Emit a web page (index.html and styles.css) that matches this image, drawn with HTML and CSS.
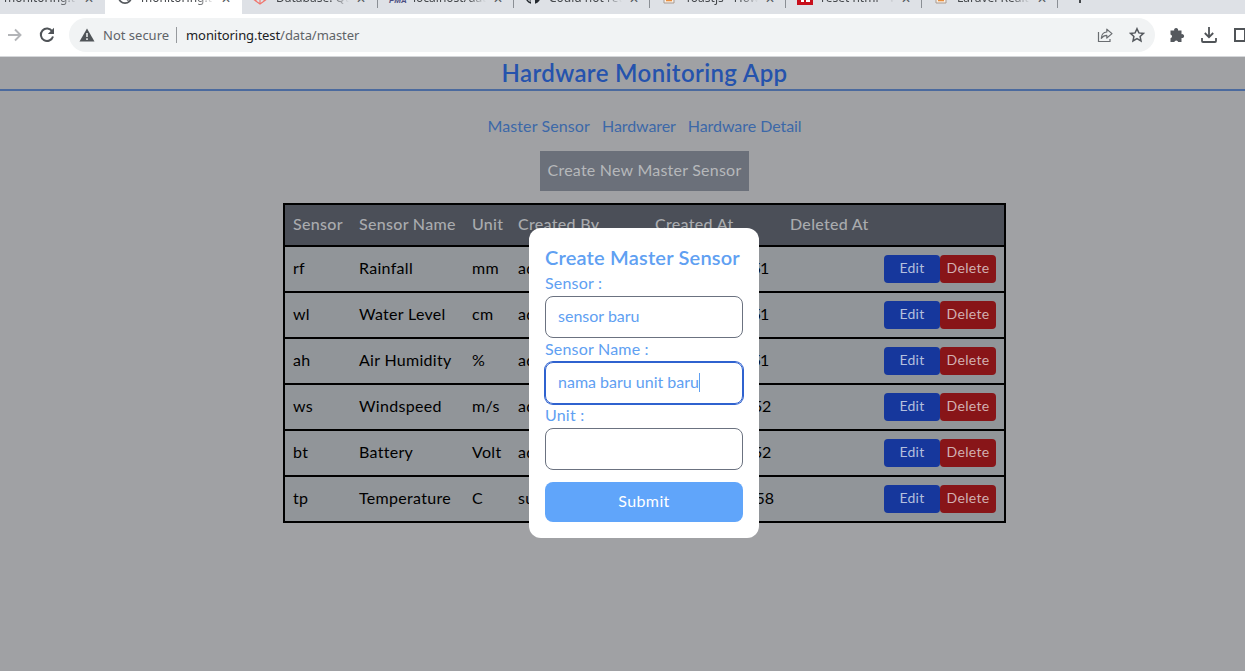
FILE: index.html
```html
<!DOCTYPE html>
<html lang="en">
<head>
<meta charset="utf-8">
<title>Hardware Monitoring App</title>
<link rel="stylesheet" href="styles.css">
</head>
<body>
<header class="browser">
  <div class="tabs">
    <div class="tab first"><span class="label">monitoring.t</span><span class="close">✕</span></div>
    <div class="tab active"><svg class="fav" viewBox="0 0 16 16"><circle cx="8" cy="8" r="6.200" fill="#fff" stroke="#55595e" stroke-width="1.800"/><path d="M8 3h5l1 6-3 3-3-2z" fill="#55595e"/></svg><span class="label">monitoring.t</span><span class="close">✕</span></div>
    <div class="tab"><svg class="fav" viewBox="0 0 16 16"><path d="M1 3v7l7 5 7-5V3M1 6l7 4 7-4M8 10v5M4 8v4M12 8v4" fill="none" stroke="#f0736b" stroke-width="1.1"/></svg><span class="label">Database: Qu</span><span class="close">✕</span></div>
    <div class="tab"><span class="fav pma">PMA</span><span class="label">localhost/data</span><span class="close">✕</span></div>
    <div class="tab"><svg class="fav" viewBox="0 0 16 16"><path d="M8 1a7 7 0 0 0-2 13.8v-2.3c-2 .4-2.5-.8-3-1.5l1-.3c.6 1 1.200 1 2 .8 0-.6.2-1 .5-1.200C4 10 3 8 4 5h8c1 3 0 5-2.500 5.300.4.4.5 1 .5 1.700v2.800A7 7 0 0 0 8 1z" fill="#24292f"/></svg><span class="label">Could not ret</span><span class="close">✕</span></div>
    <div class="tab"><svg class="fav" viewBox="0 0 16 16"><path d="M3 4v10h10V4" fill="#f8eee4" stroke="#a99b91"/><path d="M5 11.500h6M5 8.500h6" stroke="#e88d3c" stroke-width="1.400"/></svg><span class="label">Toastjs - How</span><span class="close">✕</span></div>
    <div class="tab"><svg class="fav" viewBox="0 0 16 16"><path d="M0 0h16v16H0z" fill="#c8101c"/><path d="M4 6h3v7H4zM9 9h4v4H9z" fill="#fff"/></svg><span class="label">reset html - V</span><span class="close">✕</span></div>
    <div class="tab"><svg class="fav" viewBox="0 0 16 16"><path d="M3 4v10h10V4" fill="#f8eee4" stroke="#a99b91"/><path d="M5 11.500h6M5 8.500h6" stroke="#e88d3c" stroke-width="1.400"/></svg><span class="label">Laravel Realti</span><span class="close">✕</span></div>
    <div class="newtab"></div>
  </div>
  <div class="toolbar">
    <svg class="forward" viewBox="0 0 16 16"><path d="M1 8h12M8 2.500 13.500 8 8 13.500" fill="none" stroke="#b3b5b8" stroke-width="1.900"/></svg>
    <svg class="reload" viewBox="0 0 16 16"><path d="M13.200 4.300A6.200 6.200 0 1 0 14 9.500" fill="none" stroke="#505458" stroke-width="2"/><path d="M15 .800v6.200H8.800z" fill="#505458"/></svg>
    <div class="omnibox">
      <svg class="warn" viewBox="0 0 16 14"><path d="M8 .500 15.500 13.500H.500z" fill="#505458"/><path d="M8 5v4M8 10.300v1.700" stroke="#f1f3f4" stroke-width="1.500"/></svg>
      <span class="secure">Not secure</span>
      <span class="address"><b>monitoring.test</b>/data/master</span>
      <svg class="share" viewBox="0 0 16 16"><path d="M1.500 5v9.500h11.500V12" fill="none" stroke="#6a6d71" stroke-width="1.200"/><path d="M4.300 11.300C4.500 7.500 6.500 5.200 9.800 5V2.200L15 6.600 9.800 11V8.300C7.500 8.300 5.700 9.300 4.300 11.300z" fill="none" stroke="#6a6d71" stroke-width="1.200" stroke-linejoin="round"/></svg>
      <svg class="star" viewBox="0 0 16 16"><path d="M8 1.700l1.900 4.200 4.600.5-3.400 3.100.9 4.500L8 11.700 4 14l.9-4.500L1.500 6.400l4.600-.5z" fill="none" stroke="#55595e" stroke-width="1.500"/></svg>
    </div>
    <svg class="puzzle" viewBox="0 0 16 16"><path d="M1.500 3.500h3.700a2 2 0 1 1 3.800 0h3.500v3.700a2 2 0 1 1 0 3.800v4H9.200a2 2 0 0 0-3.900 0H1.500v-3.700a2 2 0 0 0 0-3.900z" fill="#55595e"/></svg>
    <svg class="download" viewBox="0 0 16 16"><path d="M8 0v10M3.800 6 8 10.200 12.200 6M1 11v3q0 1 1 1h12q1 0 1-1v-3" fill="none" stroke="#505458" stroke-width="1.800"/></svg>
    <span class="panel"></span>
  </div>
</header>
<main class="page">
  <h1 class="brand"><span>Hardware Monitoring App</span></h1>
  <nav class="links"><a class="l1">Master Sensor</a><a class="l2">Hardwarer</a><a class="l3">Hardware Detail</a></nav>
  <button class="create">Create New Master Sensor</button>
  <div class="table">
    <div class="row head"><span>Sensor</span><span>Sensor Name</span><span>Unit</span><span>Created By</span><span>Created At</span><span>Deleted At</span><span></span></div>
    <div class="row"><span>rf</span><span>Rainfall</span><span>mm</span><span>admin</span><span class="time tight">2023-08-10 51</span><span></span><div class="actions"><button class="edit">Edit</button><button class="delete">Delete</button></div></div>
    <div class="row"><span>wl</span><span>Water Level</span><span>cm</span><span>admin</span><span class="time tight">2023-08-10 51</span><span></span><div class="actions"><button class="edit">Edit</button><button class="delete">Delete</button></div></div>
    <div class="row"><span>ah</span><span>Air Humidity</span><span>%</span><span>admin</span><span class="time tight">2023-08-10 51</span><span></span><div class="actions"><button class="edit">Edit</button><button class="delete">Delete</button></div></div>
    <div class="row"><span>ws</span><span>Windspeed</span><span>m/s</span><span>admin</span><span class="time">2023-08-10 52</span><span></span><div class="actions"><button class="edit">Edit</button><button class="delete">Delete</button></div></div>
    <div class="row"><span>bt</span><span>Battery</span><span>Volt</span><span>admin</span><span class="time">2023-08-10 52</span><span></span><div class="actions"><button class="edit">Edit</button><button class="delete">Delete</button></div></div>
    <div class="row"><span>tp</span><span>Temperature</span><span>C</span><span>super</span><span class="time late">2023-08-10 58</span><span></span><div class="actions"><button class="edit">Edit</button><button class="delete">Delete</button></div></div>
  </div>
  <form class="modal">
    <h2>Create Master Sensor</h2>
    <label>Sensor :</label>
    <div class="field">sensor baru</div>
    <label>Sensor Name :</label>
    <div class="field focused">nama baru unit baru<i class="caret"></i></div>
    <label>Unit :</label>
    <div class="field"></div>
    <button class="submit" type="button">Submit</button>
  </form>
</main>
</body>
</html>
```

FILE: styles.css
```css
* { box-sizing: border-box; }
body { margin: 0; width: 1245px; height: 671px; overflow: hidden; background: #a0a1a4; font: 16px/24px Lato, sans-serif; }
svg { display: block; flex: none; }
button { border: 0; padding: 0 0 2px; font: inherit; letter-spacing: inherit; }

.browser { height: 57px; background: #fff; border-bottom: 1px solid #d5d7da; font-family: "Noto Sans", sans-serif; overflow: hidden; }
.tabs { display: flex; height: 14px; background: #dee1e6; overflow: hidden; }
.tab { display: flex; flex: none; width: 136px; height: 8px; border-right: 1px solid #8b8f95; padding-left: 11px; }
.tab.first { width: 105px; height: 14px; padding-left: 4px; border: 0; border-radius: 0 0 7px 0; }
.tab.active { width: 137px; height: 14px; background: #fff; border: 0; padding-left: 12px; }
.tab.active + .tab { padding-left: 10px; }
.fav { width: 16px; height: 16px; margin: -11px 8px 0 0; flex: none; }
.pma { font: italic bold 8px/10px "Liberation Sans", sans-serif; color: #4a4c80; margin-top: -4px; }
.label { width: 73px; overflow: hidden; white-space: nowrap; font-size: 12px; line-height: 16px; height: 16px; margin-top: -10px; color: #44474b; -webkit-mask-image: linear-gradient(90deg, #000 75%, transparent); }
.close { font: 12px/14px "DejaVu Sans", sans-serif; color: #55595e; margin: -8px 0 0 7px; }
.newtab { width: 2px; height: 3px; background: #44474b; margin-left: 21px; }

.toolbar { display: flex; align-items: center; height: 42px; }
.forward { width: 16px; height: 16px; margin-left: 7px; }
.reload { width: 16px; height: 16px; margin-left: 16px; }
.omnibox { display: flex; align-items: center; width: 1086px; height: 34px; margin-left: 14px; padding: 0 10px; border-radius: 17px; background: #f1f3f4; flex: none; color: #5f6368; }
.warn { width: 16px; height: 14px; }
.secure { width: 74px; margin-left: 8px; border-right: 1px solid #96999d; line-height: 16px; white-space: nowrap; font-size: 13px; }
.address { flex: 1; margin-left: 9px; font-size: 13px; letter-spacing: -.07px; }
.address b { font-weight: 400; color: #202124; }
.share { width: 16px; height: 16px; margin-right: 16px; }
.star { width: 16px; height: 16px; }
.puzzle { width: 16px; height: 16px; margin-left: 14px; }
.download { width: 16px; height: 16px; margin-left: 16px; }
.panel { width: 12px; height: 14px; margin-left: 17px; border: 2px solid #505458; flex: none; }

.page { position: relative; display: flex; flex-direction: column; align-items: center; width: 1289px; }
.brand { width: 100%; height: 34px; margin: 0; border-bottom: 2px solid #4b6a9e; color: #2553ad; font-size: 24px; line-height: 32px; font-weight: 600; text-align: center; letter-spacing: .37px; }
.links { display: flex; gap: 12px; height: 24px; margin-top: 23px; color: #3c68a8; }
.l1 { letter-spacing: .12px; }
.l2 { letter-spacing: -.1px; }
.l3 { letter-spacing: -.05px; }
.create { width: 209px; height: 40px; margin-top: 13px; background: #6b707a; color: #b6b8bb; letter-spacing: .23px; white-space: nowrap; }
.table { width: 723px; margin-top: 12px; border: 2px solid #000; background: #919599; color: #000; letter-spacing: .3px; }
.row { display: grid; grid-template-columns: 66px 113px 46px 137px 135px 94px 128px; height: 46px; align-items: center; border-bottom: 2px solid #000; white-space: nowrap; }
.row:last-child { height: 44px; border-bottom: 0; }
.row > * { padding-left: 8px; }
.row > span { padding-bottom: 2px; }
.head { height: 42px; background: #4b4f58; color: #a9abae; font-weight: 500; }
.time { width: 124px; text-align: right; letter-spacing: -.3px; }
.tight { width: 121px; letter-spacing: -1.2px; }
.late { width: 127px; letter-spacing: 0; }
.actions { display: flex; }
.edit, .delete { width: 56px; height: 28px; border-radius: 4px; background: #16379c; color: #b4bfdd; font-size: 14px; line-height: 20px; letter-spacing: .3px; }
.delete { background: #881518; color: #d2b0b1; }

.modal { position: absolute; left: 529px; top: 171px; width: 230px; height: 310px; padding: 15px 16px 16px; border-radius: 12px; background: #fff; color: #60a0f2; letter-spacing: .2px; display: flex; flex-direction: column; }
.modal h2 { margin: 0; font-size: 20px; line-height: 28px; font-weight: 600; white-space: nowrap; letter-spacing: .2px; }
.field { display: flex; align-items: center; height: 42px; margin: 1px 0 -1px; padding: 0 12px 2px; border: 1px solid #6b7280; border-radius: 8px; flex: none; white-space: nowrap; letter-spacing: 0; }
.focused { border-color: #2f62cf; box-shadow: 0 0 0 1px #2f62cf; }
.caret { width: 1px; height: 19px; background: #60a0f2; }
.submit { height: 40px; margin-top: 13px; border-radius: 8px; background: #60a5fa; color: #fff; letter-spacing: .4px; }
```
